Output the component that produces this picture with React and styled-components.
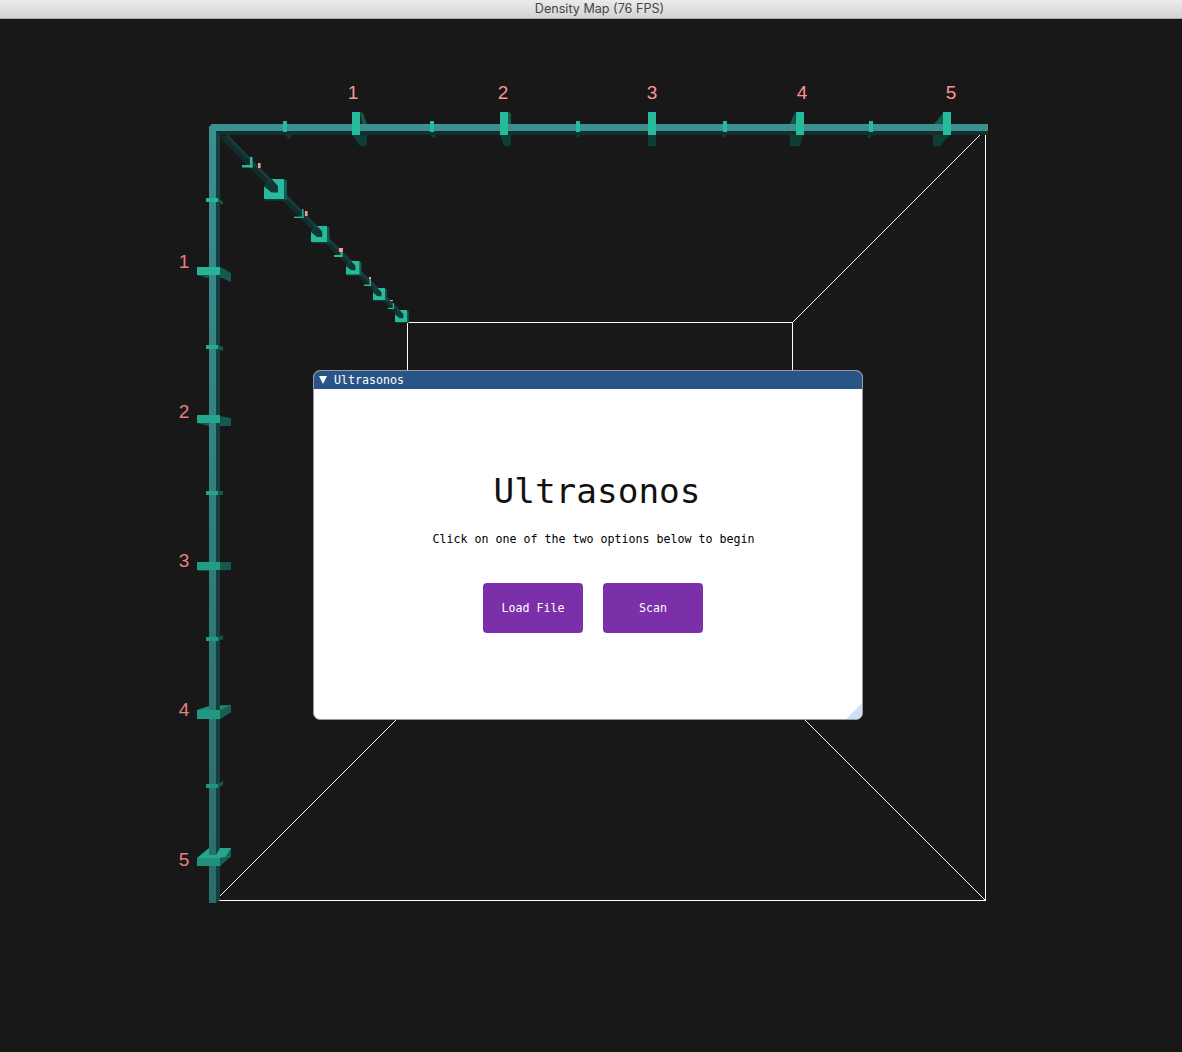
import styled, { createGlobalStyle } from "styled-components";

const GlobalStyle = createGlobalStyle`
  html, body {
    margin: 0;
    padding: 0;
    background: #181818;
  }
`;

const topNumbers = [
  { label: "1", x: 353 },
  { label: "2", x: 503 },
  { label: "3", x: 652 },
  { label: "4", x: 802 },
  { label: "5", x: 951 },
];
const leftNumbers = [
  { label: "1", y: 268 },
  { label: "2", y: 418 },
  { label: "3", y: 567 },
  { label: "4", y: 716 },
  { label: "5", y: 866 },
];

// dark sides of the ticks on the top axis
const topSides = [
  "360,112 363,113 367,124 362,124",
  "508,112 511,113 511,124 508,124",
  "795,112 790,124 796,124",
  "944,112 934,124 944,124",
];
const topUnders = [
  "352,135 367,135 367,146 360,146",
  "500,135 511,135 511,146 504,146",
  "648,135 656,135 656,146 648,146",
  "790,135 803,135 800,146 790,146",
  "933,135 950,135 940,146 933,146",
  "283,132 288,132 291,136 291,138 288,138",
  "430,132 434,132 436,137 432,138",
  "576,132 580,132 580,137 577,137",
  "723,132 727,132 726,137 723,137",
  "869,132 873,132 870,138 867,138",
];
const topBig = [352, 500, 648, 796, 943];
const topSmall = [283, 430, 576, 723, 869];

const leftSmall = [198, 345, 491, 637, 784];
const leftSmallSides = [
  "218,198 223,202 223,205 218,202",
  "218,345 223,347 223,351 218,349",
  "218,491 223,491 223,495 218,495",
  "218,637 223,635 223,639 218,641",
  "218,784 223,781 223,785 218,788",
];

const squares = [
  { x: 264, y: 179, s: 20 },
  { x: 311, y: 226, s: 16 },
  { x: 346, y: 261, s: 13.5 },
  { x: 373, y: 288, s: 12 },
  { x: 395, y: 310, s: 12 },
];

const corners = [
  { x: 242, y: 157, w: 10.5, h: 10.5, t: 2.5, px: 258, py: 163, pw: 2.6, ph: 5 },
  { x: 294, y: 209, w: 9.5, h: 9, t: 1.4, px: 305, py: 211, pw: 2.6, ph: 5 },
  { x: 334, y: 249, w: 8.5, h: 8, t: 2, px: 339, py: 248, pw: 4, ph: 4 },
  { x: 364, y: 279, w: 7, h: 7, t: 1.4, px: 369, py: 277, pw: 2, ph: 2 },
  { x: 388, y: 303, w: 6, h: 6, t: 1.2, px: 390, py: 300, pw: 3, ph: 1 },
];

function DepthSquare({ x, y, s }) {
  const cut = s * 0.38;
  const side = s * 0.15;
  return (
    <g>
      <rect x={x + s} y={y + 1} width={side} height={s} fill="#14594e" />
      <rect x={x + 1} y={y + s} width={s} height={side * 0.6} fill="#0f3d36" />
      <polygon
        points={`${x + cut},${y} ${x + s},${y} ${x + s},${y + s} ${x},${y + s} ${x},${y + cut}`}
        fill="#26bb9c"
      />
      <polygon
        points={`${x + cut},${y} ${x + s * 0.7},${y + s * 0.35} ${x + s * 0.7},${y + s * 0.68} ${x + cut},${y + s * 0.68} ${x},${y + cut}`}
        fill="#143534"
      />
    </g>
  );
}

function Scene() {
  return (
    <SceneSvg viewBox="0 19 1182 1033">
      <defs>
        <linearGradient id="leftBar" x1="0" y1="127" x2="0" y2="903" gradientUnits="userSpaceOnUse">
          <stop offset="0" stopColor="#3a8f8f" />
          <stop offset="1" stopColor="#2a6c6c" />
        </linearGradient>
        <linearGradient id="leftTick" x1="0" y1="198" x2="0" y2="866" gradientUnits="userSpaceOnUse">
          <stop offset="0" stopColor="#26b497" />
          <stop offset="1" stopColor="#1f9079" />
        </linearGradient>
      </defs>

      {/* wire frame */}
      <g stroke="#ffffff" strokeWidth="1" fill="none" shapeRendering="crispEdges">
        <rect x="407.5" y="322.5" width="385" height="300" />
        <line x1="218" y1="900.5" x2="986" y2="900.5" />
        <line x1="985.5" y1="132" x2="985.5" y2="900" />
      </g>
      <g stroke="#ffffff" strokeWidth="1" fill="none">
        <line x1="792.5" y1="322.5" x2="981" y2="134" />
        <line x1="219" y1="897" x2="400" y2="716" />
        <line x1="800" y1="715" x2="985.5" y2="900.5" />
      </g>

      {/* diagonal axis */}
      <polygon points="219,137 228,135 403,313 397,315" fill="#122d2c" />
      <polygon points="224,133 228,135 403,313 401,315 232,143" fill="#173d3c" />

      {corners.map((c) => (
        <g key={c.x}>
          <rect x={c.x} y={c.y + c.h - c.t} width={c.w} height={c.t} fill="#26bb9c" />
          <rect x={c.x + c.w - c.t} y={c.y} width={c.t} height={c.h} fill="#26bb9c" />
          <rect x={c.px} y={c.py} width={c.pw} height={c.ph} fill="#f99a9a" />
        </g>
      ))}
      {squares.map((s) => (
        <DepthSquare key={s.x} {...s} />
      ))}

      {/* left axis */}
      <polygon points="220,267 226,270 231,273 231,282 222,278 207,278 197,275" fill="#14594e" />
      <polygon points="220,416 231,418 231,426 209,426 197,423" fill="#14594e" />
      <polygon points="220,562 231,562 231,570 197,571" fill="#14594e" />
      <polygon points="197,710 209,706 231,705 231,712 220,719" fill="#1c8c76" />
      <polygon points="197,858 209,848 231,848 231,856 220,866" fill="#26a78d" />
      <polygon points="220,719 231,712 231,705 220,710" fill="#15604f" />
      <polygon points="220,866 231,856 231,848 220,858" fill="#15604f" />

      <polygon points="216,127 220,127 220,900 216,903" fill="#173f3f" />
      <polygon points="212,124 216,124 216,903 209,903 209,127" fill="url(#leftBar)" />

      {/* bar runs behind the plate here */}
      <polygon points="209,855 216,855 220,848 231,848 231,856 220,858 197,858" fill="#26a78d" />
      <polygon points="220,858 231,856 231,848 220,866" fill="#15604f" />

      <rect x="197" y="267" width="23" height="8" fill="#26b497" />
      <rect x="197" y="415" width="23" height="8" fill="#24a68c" />
      <rect x="197" y="562" width="23" height="8" fill="#229c84" />
      <rect x="197" y="710" width="23" height="9" fill="url(#leftTick)" />
      <rect x="197" y="858" width="23" height="8" fill="url(#leftTick)" />
      {leftSmall.map((y) => (
        <rect key={y} x="206" y={y} width="12" height="4" fill="url(#leftTick)" />
      ))}
      {leftSmallSides.map((p) => (
        <polygon key={p} points={p} fill="#14594e" />
      ))}

      {/* top axis */}
      {topUnders.map((p) => (
        <polygon key={p} points={p} fill="#0f3d36" />
      ))}
      {topSides.map((p) => (
        <polygon key={p} points={p} fill="#14594e" />
      ))}
      <polygon points="216,131 988,131 988,135 220,135" fill="#12302f" />
      <polygon points="212,124 988,124 988,131 216,131 209,127" fill="#3b9090" />
      {topBig.map((x) => (
        <rect key={x} x={x} y="112" width="8" height="23" fill="#27bb9d" />
      ))}
      {topSmall.map((x) => (
        <rect key={x} x={x} y="121" width="4" height="11" fill="#27bb9d" />
      ))}

      {/* numbers */}
      {topNumbers.map((n) => (
        <AxisNumber key={n.label} x={n.x} y="99" fill="#ff9292">
          {n.label}
        </AxisNumber>
      ))}
      {leftNumbers.map((n) => (
        <AxisNumber key={n.label} x="184" y={n.y} fill="#ea7f7f">
          {n.label}
        </AxisNumber>
      ))}
    </SceneSvg>
  );
}

export default function App() {
  return (
    <>
      <GlobalStyle />
      <Page>
        <TitleBar>Density Map (76 FPS)</TitleBar>
        <Viewport>
          <Scene />
          <Window>
            <WindowHeader>
              <CollapseArrow />
              <WindowTitle>Ultrasonos</WindowTitle>
            </WindowHeader>
            <WindowBody>
              <Heading>Ultrasonos</Heading>
              <Subtitle>Click on one of the two options below to begin</Subtitle>
              <Buttons>
                <ActionButton>Load File</ActionButton>
                <ActionButton>Scan</ActionButton>
              </Buttons>
            </WindowBody>
            <ResizeGrip />
          </Window>
        </Viewport>
      </Page>
    </>
  );
}

const Page = styled.div`
  width: 1182px;
  height: 1052px;
  overflow: hidden;
  background: #181818;
  display: flex;
  flex-direction: column;
`;

const TitleBar = styled.div`
  height: 19px;
  box-sizing: border-box;
  flex: none;
  display: flex;
  align-items: center;
  justify-content: center;
  padding: 0 0 2px 17px;
  background: linear-gradient(#ebebeb, #d3d3d3);
  border-bottom: 1px solid #a8a8a8;
  font-family: Inter, "Liberation Sans", Arial, sans-serif;
  font-size: 12.6px;
  color: #454545;
`;

const Viewport = styled.div`
  position: relative;
  flex: 1;
`;

const SceneSvg = styled.svg`
  display: block;
  width: 1182px;
  height: 1033px;
`;

const AxisNumber = styled.text`
  font-family: "Liberation Sans", Arial, sans-serif;
  font-size: 19px;
  text-anchor: middle;
`;

const Window = styled.div`
  position: absolute;
  left: 313px;
  top: 351px;
  width: 550px;
  height: 350px;
  box-sizing: border-box;
  border: 1px solid #9a9aa0;
  border-radius: 7px;
  background: #ffffff;
  overflow: hidden;
  display: flex;
  flex-direction: column;
  font-family: "DejaVu Sans Mono", "Liberation Mono", monospace;
`;

const WindowHeader = styled.div`
  height: 18px;
  flex: none;
  display: flex;
  align-items: center;
  gap: 7px;
  padding-left: 5px;
  background: #295488;
`;

const CollapseArrow = styled.span`
  width: 0;
  height: 0;
  border-left: 4.5px solid transparent;
  border-right: 4.5px solid transparent;
  border-top: 8px solid #ffffff;
`;

const WindowTitle = styled.span`
  color: #ffffff;
  font-size: 11.63px;
`;

const WindowBody = styled.div`
  flex: 1;
  display: flex;
  flex-direction: column;
  align-items: center;
  padding: 82px 0 0 10px;
`;

const Heading = styled.h1`
  margin: 0 0 0 8px;
  font-family: "DejaVu Sans Mono", "Liberation Mono", monospace;
  font-size: 34.4px;
  line-height: 40px;
  font-weight: 400;
  color: #111111;
`;

const Subtitle = styled.p`
  margin: 21px 0 0 1px;
  font-size: 11.63px;
  line-height: 14px;
  color: #000000;
`;

const Buttons = styled.div`
  margin-top: 37px;
  display: flex;
  gap: 20px;
`;

const ActionButton = styled.button`
  width: 100px;
  height: 50px;
  border: none;
  border-radius: 4px;
  background: #7b2fa8;
  color: #ffffff;
  font-family: "DejaVu Sans Mono", "Liberation Mono", monospace;
  font-size: 11.63px;
  padding: 0;
`;

const ResizeGrip = styled.div`
  position: absolute;
  right: 0;
  bottom: 0;
  width: 16px;
  height: 16px;
  background: #cfe1f9;
  clip-path: polygon(100% 0, 100% 100%, 0 100%);
`;
